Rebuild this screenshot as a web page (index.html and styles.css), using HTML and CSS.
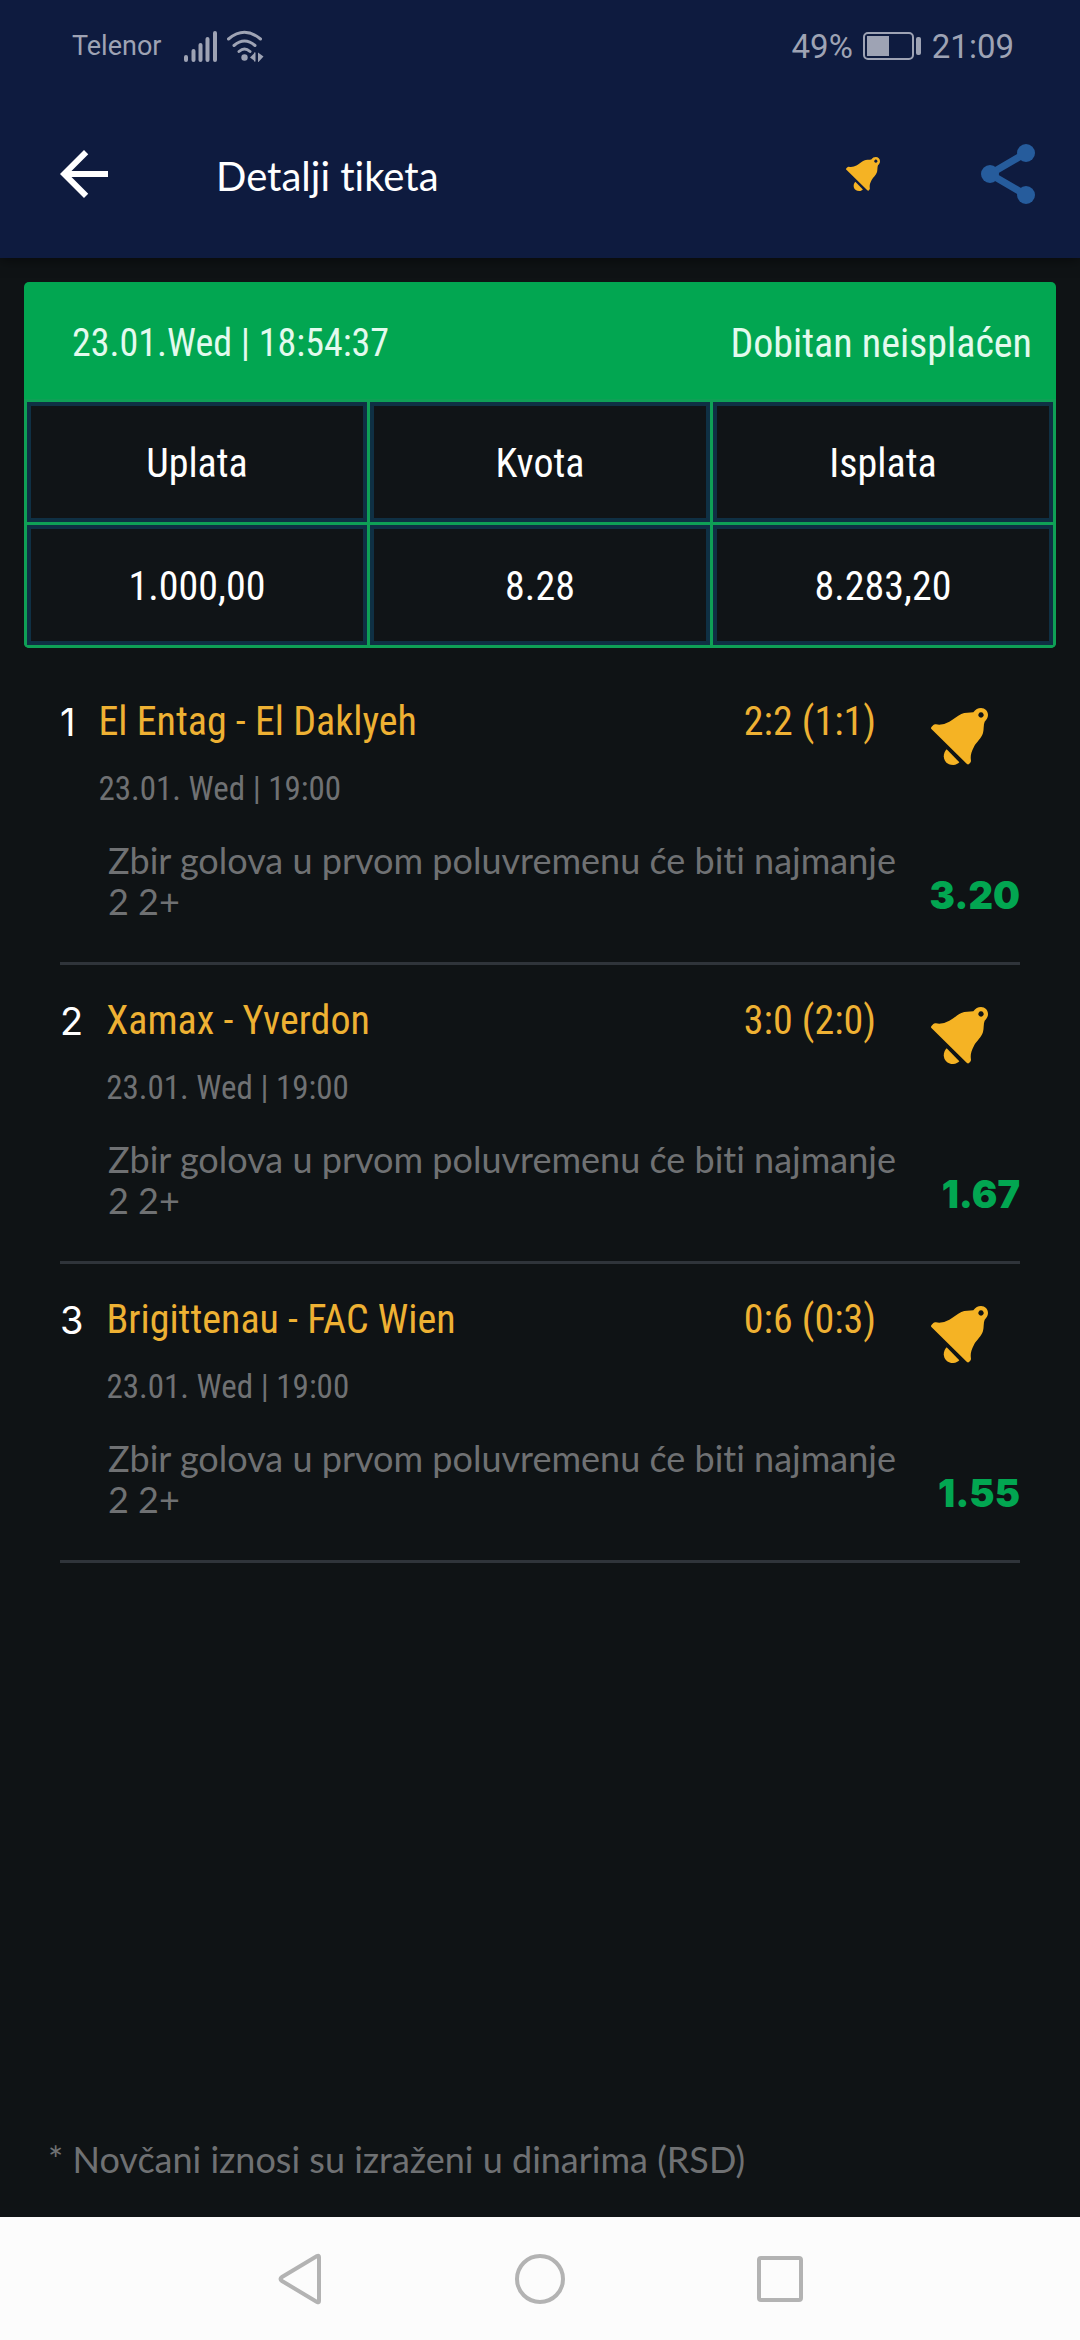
FILE: index.html
```html
<!DOCTYPE html>
<html lang="sr-Latn">
<head>
<meta charset="utf-8">
<meta name="viewport" content="width=device-width">
<title>Detalji tiketa</title>
<link rel="stylesheet" href="styles.css">
</head>
<body>
<svg class="defs" aria-hidden="true">
  <symbol id="bell" viewBox="90 53 171 171">
    <path fill-rule="evenodd" d="M92 117Q88 113 92 109L97 104Q100 101 105 102Q124 106 145 94C158 87 168 77 181 71C192 66 205 68 217 66C223 57 231 53 240 53C252 53 261 62 261 74C261 83 256 89 251 94C247 103 249 117 246 128C241 145 227 154 219 169C209 187 208 200 210 211Q210 215 207 218L204 221Q201 224 197 220ZM240 66a8 8 0 1 0 0.1 0Z"/>
    <path d="M137 177C121 192 127 224 157 224C165 224 171 220 175 216Z"/>
  </symbol>
</svg>

<header class="top">
  <div class="status">
    <span class="carrier">Telenor</span>
    <svg class="signal" width="34" height="32" viewBox="0 0 34 32" aria-hidden="true"><path d="M2 27v3M9.500 21v9M16.500 15v15M23.500 9v21M31 3v27"/></svg>
    <svg class="wifi" width="38" height="32" viewBox="0 0 38 32" aria-hidden="true">
      <path class="arc" d="M2.500 9Q18.500-4.500 34.500 9M8 15.500Q18.500 6.500 29 15.500M13 21.500Q18.500 16.500 24 21.500"/>
      <circle cx="18.500" cy="27.500" r="3.200"/><path d="M24 27.500l4-4v-1h1.500v9H28v-1zM32 22.500l5.500 4-5.500 6z"/>
    </svg>
    <span class="level">49%</span>
    <svg class="battery" width="59" height="28" viewBox="0 0 59 28" aria-hidden="true"><rect class="shell" x="1" y="1" width="49" height="26" rx="4"/><path d="M4 4h22v20H4z"/><rect x="53" y="5" width="5" height="18" rx="2"/></svg>
    <span class="clock">21:09</span>
  </div>
  <div class="appbar">
    <button class="icon-btn back" aria-label="Nazad"><svg width="48" height="48" viewBox="4 4 16 16"><path d="M20 11H7.830l5.590-5.590L12 4l-8 8 8 8 1.410-1.410L7.830 13H20z"/></svg></button>
    <h1 class="title">Detalji tiketa</h1>
    <button class="icon-btn alert" aria-label="Obaveštenja"><svg width="34" height="34"><use href="#bell"/></svg></button>
    <button class="icon-btn share" aria-label="Podeli"><svg width="54" height="60" viewBox="0 0 54 60"><path d="M45 9L9 30l36 21"/><circle cx="9" cy="30" r="9"/><circle cx="45" cy="9" r="9"/><circle cx="45" cy="51" r="9"/></svg></button>
  </div>
</header>

<main class="content">
  <section class="ticket">
    <div class="ticket-head"><span class="placed">23.01.Wed | 18:54:37</span><span>Dobitan neisplaćen</span></div>
    <table class="totals">
      <thead><tr><th scope="col">Uplata</th><th scope="col">Kvota</th><th scope="col">Isplata</th></tr></thead>
      <tbody><tr><td>1.000,00</td><td>8.28</td><td>8.283,20</td></tr></tbody>
    </table>
  </section>

  <ul class="matches">
    <li class="match">
      <div class="match-head">
        <span class="index">1</span>
        <div class="teams"><h2 class="name">El Entag - El Daklyeh</h2><p class="date">23.01. Wed | 19:00</p></div>
        <span class="score">2:2 (1:1)</span>
        <button class="icon-btn notify" aria-label="Obaveštenja"><svg width="57" height="57"><use href="#bell"/></svg></button>
      </div>
      <div class="bet"><p class="desc">Zbir golova u prvom poluvremenu će biti najmanje 2 2+</p><span class="odds">3.20</span></div>
    </li>
    <li class="match">
      <div class="match-head">
        <span class="index">2</span>
        <div class="teams"><h2 class="name">Xamax - Yverdon</h2><p class="date">23.01. Wed | 19:00</p></div>
        <span class="score">3:0 (2:0)</span>
        <button class="icon-btn notify" aria-label="Obaveštenja"><svg width="57" height="57"><use href="#bell"/></svg></button>
      </div>
      <div class="bet"><p class="desc">Zbir golova u prvom poluvremenu će biti najmanje 2 2+</p><span class="odds">1.67</span></div>
    </li>
    <li class="match">
      <div class="match-head">
        <span class="index">3</span>
        <div class="teams"><h2 class="name">Brigittenau - FAC Wien</h2><p class="date">23.01. Wed | 19:00</p></div>
        <span class="score">0:6 (0:3)</span>
        <button class="icon-btn notify" aria-label="Obaveštenja"><svg width="57" height="57"><use href="#bell"/></svg></button>
      </div>
      <div class="bet"><p class="desc">Zbir golova u prvom poluvremenu će biti najmanje 2 2+</p><span class="odds">1.55</span></div>
    </li>
  </ul>

  <p class="footnote">* Novčani iznosi su izraženi u dinarima (RSD)</p>
</main>

<nav class="sysnav">
  <button class="icon-btn" aria-label="Back"><svg width="54" height="54" viewBox="0 0 54 54"><path d="M46 5v44Q46 51 44 50L9 29Q6 27 9 25L44 4Q46 3 46 5Z"/></svg></button>
  <button class="icon-btn" aria-label="Home"><svg width="54" height="54" viewBox="0 0 54 54"><circle cx="27" cy="27" r="23"/></svg></button>
  <button class="icon-btn" aria-label="Recents"><svg width="54" height="54" viewBox="0 0 54 54"><rect x="6" y="6" width="42" height="42" rx="2"/></svg></button>
</nav>
</body>
</html>
```
FILE: styles.css
```css
* { box-sizing: border-box; margin: 0; padding: 0; }

body {
  display: flex;
  flex-direction: column;
  min-height: 100vh;
  background: #0f1315;
  color: #fff;
  font-family: "Roboto Condensed", Roboto, sans-serif;
  font-size: 40px;
  font-variant-ligatures: none;
}

svg { display: block; fill: currentColor; }
.defs { position: absolute; width: 0; height: 0; }
.icon-btn { border: 0; background: none; color: inherit; cursor: pointer; }

/* Status and app bars */
.top { background: #0e1b3f; box-shadow: 0 2px 12px rgba(0, 0, 0, .5); }

.status {
  display: flex;
  align-items: center;
  height: 92px;
  padding: 0 66px 0 72px;
  color: #9ea3b4;
  font-family: Roboto, sans-serif;
  font-size: 33px;
}
.carrier { margin-right: 23px; font-size: 27px; }
.signal { fill: none; stroke: currentColor; stroke-width: 4; stroke-linecap: round; }
.wifi { margin-left: 8px; }
.wifi .arc { fill: none; stroke: currentColor; stroke-width: 3; stroke-linecap: round; }
.level { margin-left: auto; }
.battery { margin: 0 10px; }
.battery .shell { fill: none; stroke: currentColor; stroke-width: 2; }

.appbar {
  display: flex;
  align-items: center;
  height: 166px;
  padding: 0 45px 2px 60px;
}
.title {
  flex: 1;
  margin-left: 108px;
  padding-top: 4px;
  font-family: Lato, sans-serif;
  font-size: 40px;
  font-weight: 400;
  line-height: 52px;
}
.alert { margin-right: 101px; color: #f5b324; }
.share { color: #265c9c; }
.share path { fill: none; stroke: currentColor; stroke-width: 7; }

/* Ticket summary */
.content {
  flex: 1;
  display: flex;
  flex-direction: column;
  padding-top: 24px;
}
.ticket {
  margin: 0 24px;
  border-radius: 5px;
  overflow: hidden;
  background: #02a651;
}
.ticket-head {
  display: flex;
  align-items: center;
  justify-content: space-between;
  height: 117px;
  padding: 5px 24px 0 48px;
  color: #e3faee;
}
.placed { font-size: 38px; }
.totals {
  width: 100%;
  table-layout: fixed;
  border-spacing: 3px;
  background: #0fa056;
}
.totals th, .totals td {
  height: 120px;
  padding-top: 2px;
  border: 4px solid #0f3044;
  background: #101417;
  font-weight: 400;
  text-align: center;
}

/* Matches */
.matches { margin: 18px 60px 0; list-style: none; }
.match { padding: 32px 0 40px; border-bottom: 3px solid #2f343a; }
.match-head {
  display: flex;
  align-items: flex-start;
  line-height: 48px;
}
.index {
  margin-right: 23px;
  font-family: Inter, sans-serif;
  font-size: 38px;
}
.teams { flex: 1; }
.name { font-size: 40px; font-weight: 400; }
.name, .score { color: #eeb133; }
.date {
  margin-top: 23px;
  color: #6f7173;
  font-size: 33px;
  line-height: 40px;
}
.notify { margin: 10px 32px 0 55px; color: #f5b324; }
.bet {
  display: flex;
  align-items: flex-end;
  gap: 16px;
  margin-top: 31px;
  padding-left: 48px;
}
.desc {
  flex: 1;
  color: #6f7173;
  font-family: Lato, sans-serif;
  font-size: 36px;
  line-height: 41px;
}
.odds {
  min-width: 90px;
  color: #02a651;
  font-family: Inter, sans-serif;
  font-size: 38px;
  font-weight: 900;
  line-height: 54px;
  text-align: right;
}

.footnote {
  margin-top: auto;
  padding: 24px 48px 36px;
  color: #6f7173;
  font-family: Lato, sans-serif;
  font-size: 36px;
  line-height: 44px;
}

/* System navigation */
.sysnav {
  display: flex;
  justify-content: center;
  gap: 186px;
  height: 123px;
  padding: 35px 0 34px;
  background: #fcfcfc;
  color: #b3b3b3;
}
.sysnav svg { fill: none; stroke: currentColor; stroke-width: 4; }
```
